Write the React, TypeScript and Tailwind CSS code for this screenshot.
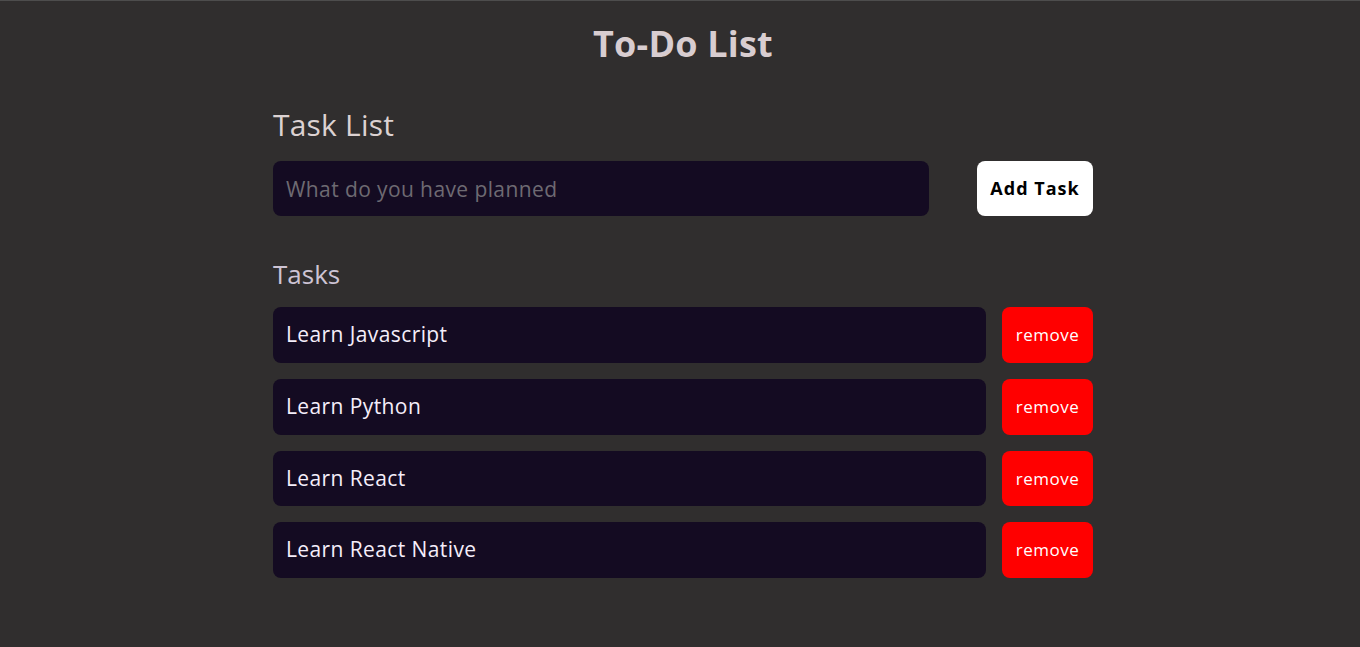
import { useState } from "react";

const initialTasks = ["Learn Javascript", "Learn Python", "Learn React", "Learn React Native"];

export default function App() {
  const [tasks, setTasks] = useState<string[]>(initialTasks);
  const [text, setText] = useState("");

  const addTask = () => {
    if (!text.trim()) return;
    setTasks([...tasks, text.trim()]);
    setText("");
  };

  const removeTask = (i: number) => {
    setTasks(tasks.filter((_, idx) => idx !== i));
  };

  return (
    <div
      className="min-h-[647px] pl-[6px] bg-[#302e2e] border-t border-[#4d4d4d]"
      style={{ fontFamily: '"Open Sans", "Liberation Sans", sans-serif' }}
    >
      <h1 className="pt-[19px] text-center text-[36px] leading-[48px] font-bold tracking-[0.2px] text-[#d8cdd0]">
        To-Do List
      </h1>

      <div className="w-[820px] mx-auto">
        {/* Add task */}
        <h2 className="mt-[37px] text-[30px] leading-[40px] tracking-[0.2px] text-[#dcd2d2]">Task List</h2>
        <div className="mt-4 flex gap-12">
          <input
            type="text"
            value={text}
            onChange={(e) => setText(e.target.value)}
            placeholder="What do you have planned"
            className="flex-1 min-w-0 h-[55px] px-[13px] rounded-lg bg-[#140b22] text-[21px] tracking-[0.4px] text-[#f5eefa] placeholder:text-[#6e6a72] outline-none"
          />
          <button
            onClick={addTask}
            className="w-[116px] h-[55px] rounded-lg bg-white text-[18px] font-bold tracking-[1px] text-black"
          >
            Add Task
          </button>
        </div>

        {/* Task list */}
        <h3 className="mt-[42px] text-[26px] leading-[32px] text-[#cdc4d4]">Tasks</h3>
        <div className="mt-[17px] flex flex-col gap-4">
          {tasks.map((t, i) => (
            <div key={i} className="flex gap-4 h-[55.75px]">
              <div className="flex-1 flex items-center px-[13px] rounded-lg bg-[#140b22] text-[21px] tracking-[0.4px] text-[#f5eefa]">
                {t}
              </div>
              <button
                onClick={() => removeTask(i)}
                className="w-[91px] rounded-lg bg-[#ff0000] text-[17px] tracking-[0.5px] text-white"
              >
                remove
              </button>
            </div>
          ))}
        </div>
      </div>
    </div>
  );
}
